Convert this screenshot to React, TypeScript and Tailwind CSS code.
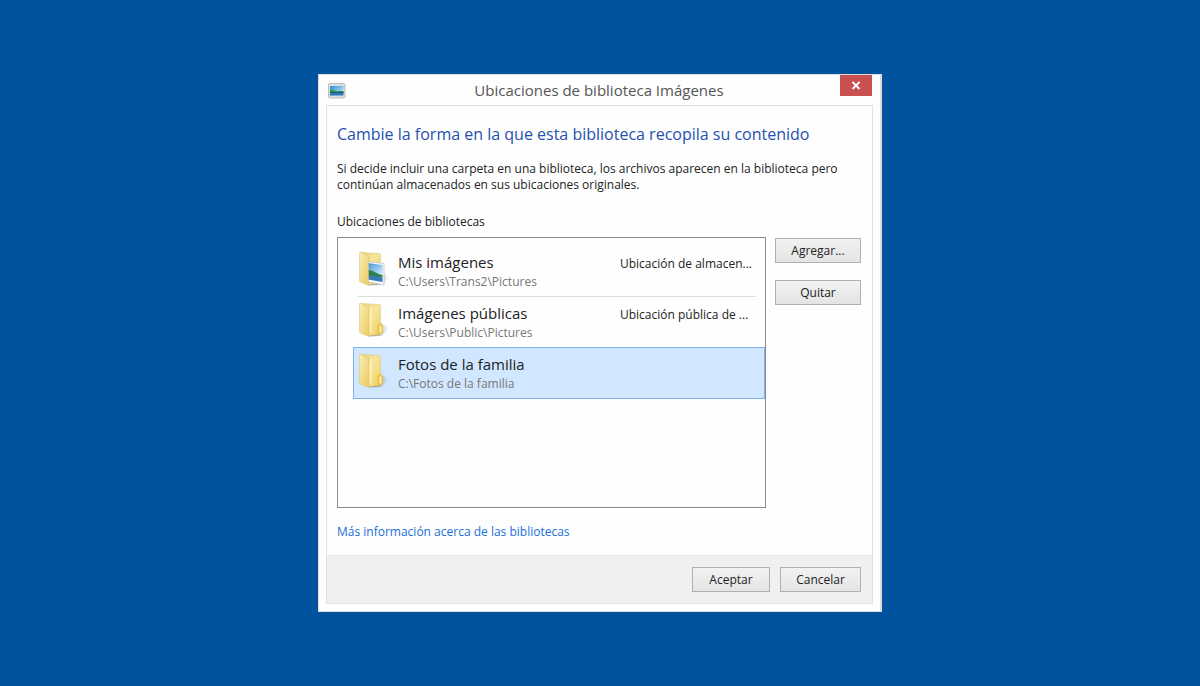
import { useState } from "react";

const locations = [
  { name: "Mis imágenes", path: "C:\\Users\\Trans2\\Pictures", note: "Ubicación de almacen...", picture: true },
  { name: "Imágenes públicas", path: "C:\\Users\\Public\\Pictures", note: "Ubicación pública de ...", picture: false },
  { name: "Fotos de la familia", path: "C:\\Fotos de la familia", note: "", picture: false },
];

function LibraryIcon() {
  return (
    <svg width="18" height="16" viewBox="0 0 18 16" aria-hidden="true">
      <defs>
        <linearGradient id="lib-sky" x1="0" y1="0" x2="1" y2="1">
          <stop offset="0" stopColor="#2f8fdc" />
          <stop offset="1" stopColor="#d8f2fb" />
        </linearGradient>
      </defs>
      <rect x="0.5" y="0.5" width="16.5" height="14.5" rx="1.5" fill="#dedede" stroke="#bdbdbd" />
      <rect x="2" y="3" width="13.5" height="9.5" fill="url(#lib-sky)" />
      <path d="M2 6.5c2-.8 4 .8 6 1.600 2 .5 4-.2 7.500 0v2H2z" fill="#2d9a5b" />
      <path d="M2 9.500h13.500v3H2z" fill="#2f78bd" />
      <path d="M2 9.300h13.500" stroke="#155b52" />
    </svg>
  );
}

function FolderIcon({ picture }: { picture: boolean }) {
  return (
    <svg width="32" height="36" viewBox="0 0 32 36" className="shrink-0" aria-hidden="true">
      <defs>
        <linearGradient id="folder-front" x1="0" y1="0" x2="1" y2="1">
          <stop offset="0" stopColor="#fbeeb4" />
          <stop offset="1" stopColor="#e9cb66" />
        </linearGradient>
        <linearGradient id="folder-back" x1="0" y1="0" x2="1" y2="1">
          <stop offset="0" stopColor="#e6cf80" />
          <stop offset="0.4" stopColor="#f8e59c" />
          <stop offset="1" stopColor="#f0cf5e" />
        </linearGradient>
        <linearGradient id="photo-sky" x1="0" y1="0" x2="1" y2="1">
          <stop offset="0" stopColor="#3f94dc" />
          <stop offset="1" stopColor="#d5eefa" />
        </linearGradient>
        <linearGradient id="folder-shadow" x1="0" y1="0" x2="1" y2="0">
          <stop offset="0.4" stopColor="#777777" stopOpacity="0.6" />
          <stop offset="1" stopColor="#8c8c8c" stopOpacity="0" />
        </linearGradient>
      </defs>
      <path d="M10 34.500 22 24q4-3 9 3.500L23 34z" fill="url(#folder-shadow)" />
      <path d="M3 1.500 21.500 2.500q1 0 1 1V21l1.500 1v8.500L21.500 32.500l-11 1z" fill="url(#folder-back)" stroke="#dcc269" strokeWidth="0.5" />
      {picture ? (
        <g>
          <path d="M9.500 10.500 26 12.500V34L9.500 31z" fill="#f8fafb" stroke="#aab4bd" strokeWidth="0.6" />
          <path d="M10 12 24.500 14v9.500L10 21z" fill="url(#photo-sky)" />
          <path d="M10 19c5-.5 8 4 14.500 5v2.500L10 25.500z" fill="#2f8050" />
          <path d="M10 24.500 24.500 26.500V31L10 28.500z" fill="#3479bb" />
        </g>
      ) : (
        <g>
          <path d="M13 5.500v26" stroke="#fff3bd" strokeWidth="1.500" opacity="0.8" />
          <path d="M19.500 23.500q3.500-4 5 0v7L20 33z" fill="#f0cb52" stroke="#d6b13f" strokeWidth="0.5" />
          <path d="M22.500 24v6.500" stroke="#fff3bd" strokeWidth="1.500" />
        </g>
      )}
      <path d="M1.500 2q0-1.200 1.200-.8l7.800 4V34.500L1.500 30.500z" fill="url(#folder-front)" stroke="#dcc269" strokeWidth="0.5" />
    </svg>
  );
}

function DialogButton({ label, className }: { label: string; className: string }) {
  return (
    <button
      type="button"
      className={`h-[25px] border border-[#b0b0b0] bg-linear-to-b from-[#f2f2f2] to-[#e4e4e4] text-xs font-medium text-[#222] hover:border-[#7eb4ea] ${className}`}
    >
      {label}
    </button>
  );
}

export default function App() {
  const [selected, setSelected] = useState(2);

  return (
    <main className="flex min-h-screen items-center justify-center bg-[#00539c] font-['Open_Sans','Noto_Sans',sans-serif]">
      <section
        aria-labelledby="dialog-title"
        className="w-full max-w-[564px] border border-r-2 border-[#dcdcdc] bg-[#fefefe] px-[7px] pb-[7px]"
      >
        <header className="mr-px grid h-[30px] grid-cols-[1fr_auto_1fr] items-start">
          <div className="pt-2 pl-[2px]">
            <LibraryIcon />
          </div>
          <h1 id="dialog-title" className="pt-[5px] text-[15px] leading-5 text-[#555]">
            Ubicaciones de biblioteca Imágenes
          </h1>
          <button
            type="button"
            aria-label="Cerrar"
            className="flex h-[21px] w-8 items-center justify-center justify-self-end bg-[#c94f50] text-white hover:bg-[#e04343]"
          >
            <svg width="10" height="9" viewBox="0 0 10 9" aria-hidden="true">
              <path d="M1.500 1 8.500 8M8.500 1 1.500 8" stroke="currentColor" strokeWidth="1.800" />
            </svg>
          </button>
        </header>

        <div className="border border-[#e2e2e2]">
          <div className="pt-4 pr-[11px] pb-[13px] pl-[10px]">
            <h2 className="text-base leading-6 text-[#2450b0]">
              Cambie la forma en la que esta biblioteca recopila su contenido
            </h2>
            <p className="mt-[15px] text-xs leading-4 font-medium text-[#222]">
              Si decide incluir una carpeta en una biblioteca, los archivos aparecen en la biblioteca pero
              continúan almacenados en sus ubicaciones originales.
            </p>
            <h3 id="list-label" className="mt-[21px] text-xs leading-4 font-medium text-[#222]">
              Ubicaciones de bibliotecas
            </h3>

            <div className="mt-[7px] flex items-start gap-[9px]">
              <ul
                role="listbox"
                aria-labelledby="list-label"
                className="h-[271px] min-w-0 flex-1 border border-[#8a8a8a] pt-[7px] pl-[15px]"
              >
                {locations.map((item, i) => (
                  <li
                    key={item.name}
                    role="option"
                    aria-selected={i === selected}
                    onClick={() => setSelected(i)}
                    className={`-mb-px h-[52px] border ${
                      i === selected ? "relative border-[#7fb3e6] bg-[#d1e7ff]" : "border-transparent"
                    }`}
                  >
                    <div
                      className={`mr-2 ml-1 flex h-[51px] border-b ${
                        i === selected ? "border-transparent" : "border-[#dedede]"
                      }`}
                    >
                      <div className="pt-[5px]">
                        <FolderIcon picture={item.picture} />
                      </div>
                      <div className="min-w-0 flex-1 pt-1 pl-2">
                        <div className="text-[15px] leading-6 text-[#222]">{item.name}</div>
                        <div className="text-xs leading-4 text-[#777]">{item.path}</div>
                      </div>
                      <div className="w-[136px] pt-[10px] text-xs leading-4 whitespace-nowrap text-[#222]">
                        {item.note}
                      </div>
                    </div>
                  </li>
                ))}
              </ul>
              <div className="flex w-[86px] flex-col gap-[17px] pt-px">
                <DialogButton label="Agregar..." className="w-full" />
                <DialogButton label="Quitar" className="w-full" />
              </div>
            </div>

            <a href="#bibliotecas" className="mt-4 inline-block text-xs leading-4 text-[#1a6fd6] hover:underline">
              Más información acerca de las bibliotecas
            </a>
          </div>

          <footer className="flex justify-end gap-[10px] border-t border-[#e4e4e4] bg-[#f0f0f0] px-[11px] py-[11px]">
            <DialogButton label="Aceptar" className="w-[78px]" />
            <DialogButton label="Cancelar" className="w-[81px]" />
          </footer>
        </div>
      </section>
    </main>
  );
}
